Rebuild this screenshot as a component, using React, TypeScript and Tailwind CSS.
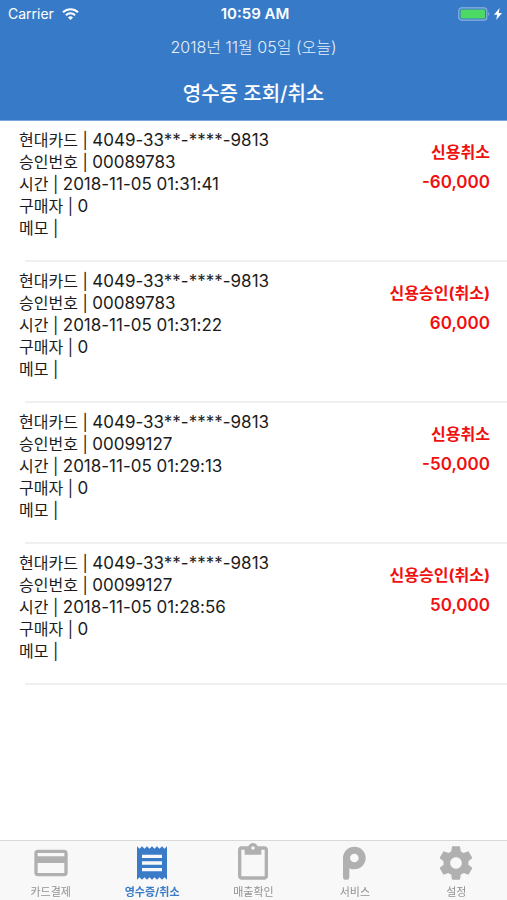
import type { ReactNode } from 'react'

interface Receipt {
  id: number
  card: string
  approvalNo: string
  time: string
  buyer: string
  memo: string
  status: string
  amount: string
}

interface Tab {
  label: string
  icon: ReactNode
  active?: boolean
}

const receipts: Receipt[] = [
  {
    id: 1,
    card: '4049-33**-****-9813',
    approvalNo: '00089783',
    time: '2018-11-05 01:31:41',
    buyer: '0',
    memo: '',
    status: '신용취소',
    amount: '-60,000',
  },
  {
    id: 2,
    card: '4049-33**-****-9813',
    approvalNo: '00089783',
    time: '2018-11-05 01:31:22',
    buyer: '0',
    memo: '',
    status: '신용승인(취소)',
    amount: '60,000',
  },
  {
    id: 3,
    card: '4049-33**-****-9813',
    approvalNo: '00099127',
    time: '2018-11-05 01:29:13',
    buyer: '0',
    memo: '',
    status: '신용취소',
    amount: '-50,000',
  },
  {
    id: 4,
    card: '4049-33**-****-9813',
    approvalNo: '00099127',
    time: '2018-11-05 01:28:56',
    buyer: '0',
    memo: '',
    status: '신용승인(취소)',
    amount: '50,000',
  },
]

const tabs: Tab[] = [
  {
    label: '카드결제',
    icon: (
      <path d="M20 4H4c-1.11 0-1.99.89-1.99 2L2 18c0 1.11.89 2 2 2h16c1.11 0 2-.89 2-2V6c0-1.11-.89-2-2-2zm0 14H4v-6h16v6zm0-10H4V6h16v2z" />
    ),
  },
  {
    label: '영수증/취소',
    active: true,
    icon: (
      <path d="M18 17H6v-2h12v2zm0-4H6v-2h12v2zm0-4H6V7h12v2zM3 22l1.5-1.5L6 22l1.5-1.5L9 22l1.5-1.5L12 22l1.5-1.5L15 22l1.5-1.5L18 22l1.5-1.5L21 22V2l-1.5 1.5L18 2l-1.5 1.5L15 2l-1.5 1.5L12 2l-1.5 1.5L9 2 7.5 3.5 6 2 4.5 3.5 3 2v20z" />
    ),
  },
  {
    label: '매출확인',
    icon: (
      <path d="M19 2h-4.18C14.4.84 13.3 0 12 0S9.6.84 9.18 2H5c-1.1 0-2 .9-2 2v16c0 1.1.9 2 2 2h14c1.1 0 2-.9 2-2V4c0-1.1-.9-2-2-2zm-7 0c.55 0 1 .45 1 1s-.45 1-1 1-1-.45-1-1 .45-1 1-1zm7 18H5V4h2v3h10V4h2v16z" />
    ),
  },
  {
    label: '서비스',
    icon: (
      <path
        fillRule="evenodd"
        d="M11.6 2.2a6.8 6.8 0 0 0-6.8 6.8v11.2a1.9 1.9 0 0 0 3.8 0v-5.1c.9.5 1.9.7 3 .7a6.8 6.8 0 0 0 0-13.6zm0 4.2a2.6 2.6 0 1 1 0 5.2 2.6 2.6 0 0 1 0-5.2z"
      />
    ),
  },
  {
    label: '설정',
    icon: (
      <path d="M19.43 12.98c.04-.32.07-.64.07-.98s-.03-.66-.07-.98l2.11-1.65c.19-.15.24-.42.12-.64l-2-3.46c-.12-.22-.39-.3-.61-.22l-2.49 1c-.52-.4-1.08-.73-1.69-.98l-.38-2.65C14.46 2.18 14.25 2 14 2h-4c-.25 0-.46.18-.49.42l-.38 2.65c-.61.25-1.17.59-1.69.98l-2.49-1c-.23-.09-.49 0-.61.22l-2 3.46c-.13.22-.07.49.12.64l2.11 1.65c-.04.32-.07.65-.07.98s.03.66.07.98l-2.11 1.65c-.19.15-.24.42-.12.64l2 3.46c.12.22.39.3.61.22l2.49-1c.52.4 1.08.73 1.69.98l.38 2.65c.03.24.24.42.49.42h4c.25 0 .46-.18.49-.42l.38-2.65c.61-.25 1.17-.59 1.69-.98l2.49 1c.23.09.49 0 .61-.22l2-3.46c.12-.22.07-.49-.12-.64l-2.11-1.65zM12 15.5c-1.93 0-3.5-1.57-3.5-3.5s1.57-3.5 3.5-3.5 3.5 1.57 3.5 3.5-1.57 3.5-3.5 3.5z" />
    ),
  },
]

function StatusBar() {
  return (
    <div className="grid grid-cols-3 items-center h-7 pl-2 pr-[5px] text-sm">
      <div className="flex items-center gap-2">
        <span>Carrier</span>
        <svg viewBox="0 0 17 12" className="w-[17px] h-3" fill="none" stroke="currentColor">
          <path d="M1 4.3a10.8 10.8 0 0 1 15 0" strokeWidth="2.2" />
          <path d="M3.9 7.2a6.7 6.7 0 0 1 9.2 0" strokeWidth="2" />
          <path d="M8.5 12 6 9.4a3.6 3.6 0 0 1 5 0z" fill="currentColor" stroke="none" />
        </svg>
      </div>
      <div className="text-center text-[15px] font-semibold">10:59 AM</div>
      <div className="flex items-center justify-end gap-1">
        <svg viewBox="0 0 32 14" className="w-8 h-3.5">
          <rect x="0.8" y="0.8" width="28" height="12.4" rx="3" fill="none" stroke="#8db3df" strokeWidth="1.2" />
          <rect x="2.6" y="2.5" width="24.4" height="9" rx="1.2" fill="#4cd964" />
          <path d="M30.3 5c1.4.5 1.4 3.5 0 4z" fill="#8db3df" />
        </svg>
        <svg viewBox="0 0 8 12" className="w-2 h-3" fill="currentColor">
          <path d="M5.6 0 0 6.8h3.2L2.2 12 8 5H4.7z" />
        </svg>
      </div>
    </div>
  )
}

function Field({ label, value }: { label: string; value: string }) {
  return (
    <p>
      {label} | <span className="text-[17px]">{value}</span>
    </p>
  )
}

function ReceiptRow({ receipt }: { receipt: Receipt }) {
  return (
    <li>
      <div className="flex justify-between pl-[19px] pr-[17px] pt-2 pb-[21px]">
        <div className="text-base leading-[22px] text-[#1c1c1c]">
          <Field label="현대카드" value={receipt.card} />
          <Field label="승인번호" value={receipt.approvalNo} />
          <Field label="시간" value={receipt.time} />
          <Field label="구매자" value={receipt.buyer} />
          <Field label="메모" value={receipt.memo} />
        </div>
        <div className="pt-2 text-right text-[#f01010]">
          <p className="text-base leading-[30px] font-bold">{receipt.status}</p>
          <p className="text-[17px] leading-[30px] font-semibold">{receipt.amount}</p>
        </div>
      </div>
      <div className="ml-[25px] h-0.5 bg-[#f0f0f0]" />
    </li>
  )
}

function TabBar() {
  return (
    <nav className="sticky bottom-0 grid grid-cols-5 h-[60px] bg-[#f8f8f8] border-t border-[#d8d8d8]">
      {tabs.map(tab => (
        <button
          key={tab.label}
          type="button"
          className={`flex flex-col items-center pt-0.5 text-[11px] leading-[18px] ${
            tab.active ? 'text-[#3a7bc8] font-bold' : 'text-[#929292]'
          }`}
        >
          <svg
            viewBox="0 0 24 24"
            className={`w-10 h-10 ${tab.active ? 'text-[#3a7bc8]' : 'text-[#b0b0b0]'}`}
            fill="currentColor"
          >
            {tab.icon}
          </svg>
          {tab.label}
        </button>
      ))}
    </nav>
  )
}

function App() {
  return (
    <div className="flex flex-col min-h-screen bg-white font-['Inter','Noto_Sans_CJK_KR',sans-serif]">
      <header className="bg-[#377bc8] text-white pb-3 border-b border-[#7ba7db]">
        <StatusBar />
        <p className="pt-2 text-center text-base leading-[22px] font-light text-[#e6effa]">
          2018년 11월 05일 (오늘)
        </p>
        <h1 className="pt-[22px] text-center text-xl leading-7 font-medium">영수증 조회/취소</h1>
      </header>
      <ul className="flex-1">
        {receipts.map(receipt => (
          <ReceiptRow key={receipt.id} receipt={receipt} />
        ))}
      </ul>
      <TabBar />
    </div>
  )
}

export default App
